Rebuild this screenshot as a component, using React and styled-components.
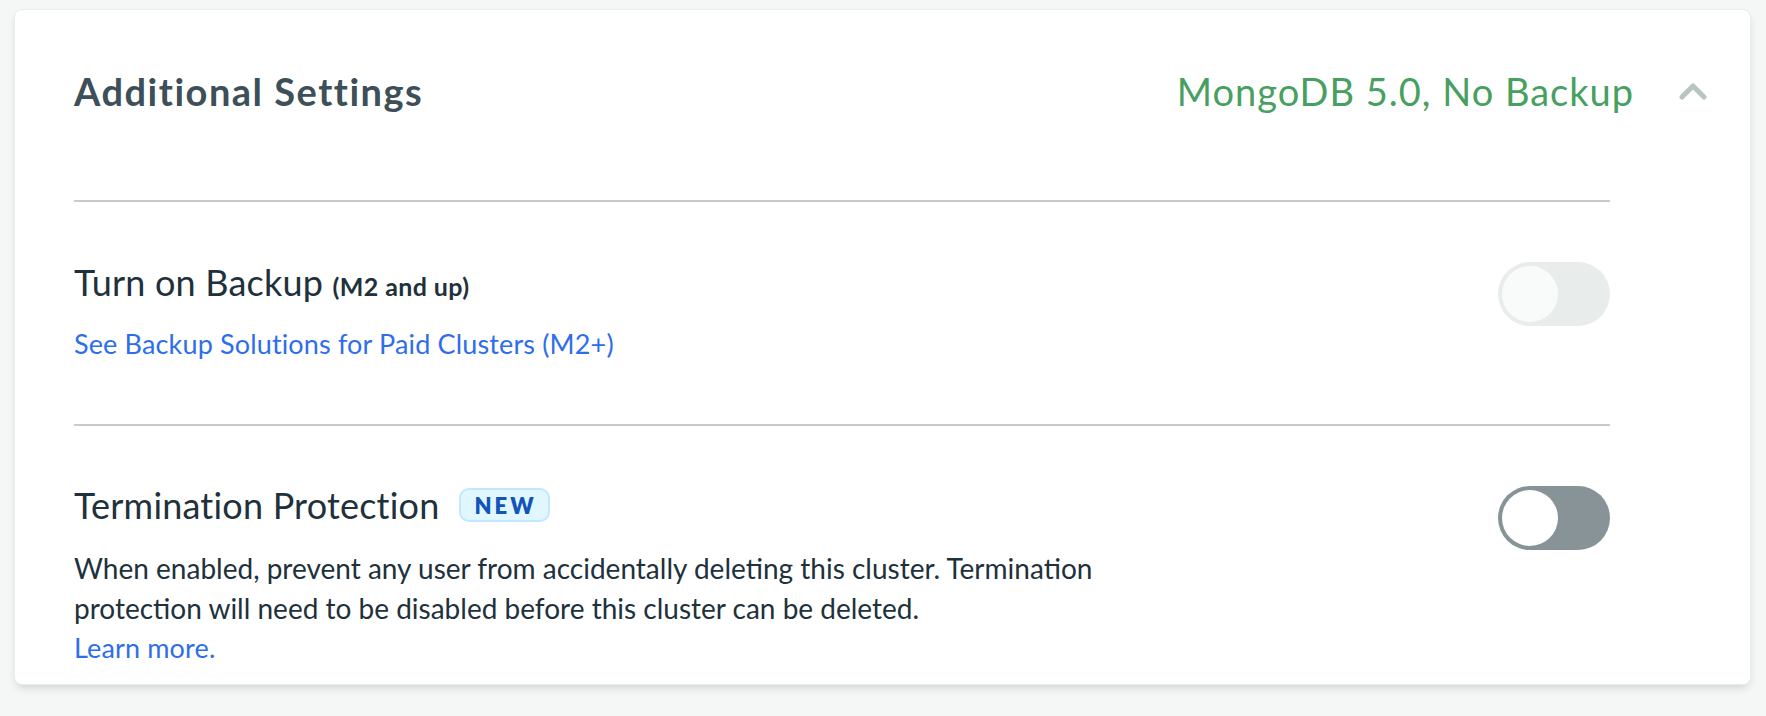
import React from "react"
import styled, { createGlobalStyle } from "styled-components"

const GlobalStyle = createGlobalStyle`
	html, body {
		margin: 0;
		padding: 0;
		background: #F5F6F6;
	}
	body {
		font-family: Lato, "Liberation Sans", sans-serif;
		color: #21313C;
	}
`

const Page = styled.div`
	padding: 9px 15px 30px 14px;
`

const Card = styled.section`
	background: #FFFFFF;
	border: 1px solid #E8EDEB;
	border-radius: 8px;
	box-shadow: 0 5px 10px -3px rgba(0, 30, 43, 0.18);
`

const Header = styled.div`
	display: flex;
	align-items: center;
	justify-content: space-between;
	padding: 61px 43px 89px 59px;
`

const Title = styled.h2`
	margin: 0;
	font-size: 38px;
	line-height: 40px;
	font-weight: 700;
	letter-spacing: 1.5px;
	color: #3D4F58;
`

const HeaderRight = styled.div`
	display: flex;
	align-items: center;
	gap: 45px;
`

const Summary = styled.span`
	font-size: 38px;
	line-height: 40px;
	letter-spacing: 1px;
	color: #47A05F;
`

const Chevron = () => (
	<svg width="28" height="18" viewBox="0 0 28 18" fill="none" stroke="#B8C4C2" strokeWidth="5" strokeLinecap="round" strokeLinejoin="round">
		<polyline points="3,15 14,4 25,15" />
	</svg>
)

const Body = styled.div`
	padding: 0 140px 16px 59px;
`

const Section = styled.div`
	display: flex;
	align-items: flex-start;
	justify-content: space-between;
	border-top: 2px solid #C6CBCA;
	padding: ${props => props.top}px 0 ${props => props.bottom}px;
`

const Info = styled.div`
	display: flex;
	flex-direction: column;
`

const LabelRow = styled.div`
	display: flex;
	align-items: center;
	gap: 20px;
`

const Label = styled.div`
	font-size: 36px;
	line-height: 40px;
	letter-spacing: 0.2px;
	color: #21313C;
`

const Small = styled.span`
	font-size: 25px;
	font-weight: 700;
	letter-spacing: 0.4px;
`

const Badge = styled.span`
	display: inline-flex;
	align-items: center;
	height: 34px;
	box-sizing: border-box;
	padding: 0 11px 0 13px;
	border: 2px solid #C3E7FE;
	border-radius: 10px;
	background: #E1F7FF;
	color: #1254B7;
	font-size: 22px;
	font-weight: 800;
	letter-spacing: 3px;
`

const Link = styled.a`
	font-size: 27px;
	line-height: 40px;
	letter-spacing: 0.15px;
	color: #2E6EEC;
	text-decoration: none;
	margin-top: ${props => props.gap || 0}px;
`

const Text = styled.p`
	margin: 23px 0 0;
	max-width: 1040px;
	font-size: 28px;
	line-height: 40px;
	color: #21313C;
`

const Track = styled.div`
	flex: none;
	display: flex;
	align-items: center;
	box-sizing: border-box;
	width: 112px;
	height: 64px;
	padding: 0 4px;
	margin-top: ${props => props.offset || 0}px;
	border-radius: 32px;
	background: ${props => props.disabled ? "#E8EDEB" : "#889397"};
`

const Knob = styled.div`
	width: 56px;
	height: 56px;
	border-radius: 50%;
	background: ${props => props.disabled ? "#F9FBFA" : "#FFFFFF"};
`

const Toggle = ({ disabled, offset }) => (
	<Track disabled={disabled} offset={offset}>
		<Knob disabled={disabled} />
	</Track>
)

export default function App() {
	return (
		<Page>
			<GlobalStyle />
			<Card>
				<Header>
					<Title>Additional Settings</Title>
					<HeaderRight>
						<Summary>MongoDB 5.0, No Backup</Summary>
						<Chevron />
					</HeaderRight>
				</Header>
				<Body>
					<Section top={60} bottom={60}>
						<Info>
							<Label>Turn on Backup <Small>(M2 and up)</Small></Label>
							<Link href="#" gap={18}>See Backup Solutions for Paid Clusters (M2+)</Link>
						</Info>
						<Toggle disabled />
					</Section>
					<Section top={59} bottom={0}>
						<Info>
							<LabelRow>
								<Label>Termination Protection</Label>
								<Badge>NEW</Badge>
							</LabelRow>
							<Text>
								When enabled, prevent any user from accidentally deleting this cluster. Termination protection will need to be disabled before this cluster can be deleted.
							</Text>
							<Link href="#">Learn more.</Link>
						</Info>
						<Toggle offset={1} />
					</Section>
				</Body>
			</Card>
		</Page>
	)
}
